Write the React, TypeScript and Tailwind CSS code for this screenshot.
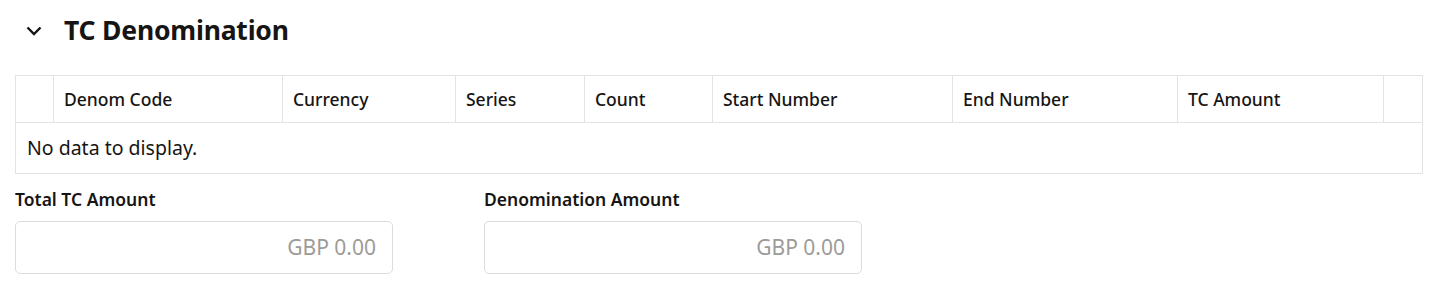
import React from "react";

const cols = ["", "Denom Code", "Currency", "Series", "Count", "Start Number", "End Number", "TC Amount", ""];

function Field({ label }: { label: string }) {
  return (
    <div className="flex flex-col w-[378px]">
      <div className="text-[17.5px] leading-[22px] font-semibold text-[#161513] h-[22px] mt-[14px]">{label}</div>
      <div className="mt-[11px] h-[53px] border border-[#dcdcdc] rounded-[5px] flex items-center justify-end pr-[16px] text-[21px] text-[#9d9b98]">
        GBP 0.00
      </div>
    </div>
  );
}

export default function App() {
  return (
    <div className="w-[1452px] h-[292px] bg-white" style={{ fontFamily: '"Noto Sans", sans-serif' }}>
      <div className="flex items-center h-[62px] pl-[24px]">
        <svg width="20" height="20" viewBox="0 0 20 20" className="mr-[20px]">
          <path d="M3.5 6.5 L10 13 L16.5 6.5" fill="none" stroke="#161513" strokeWidth="2.4" />
        </svg>
        <h1 className="text-[26.5px] font-bold text-[#161513] tracking-[-0.2px]">TC Denomination</h1>
      </div>
      <div className="ml-[15px] mt-[13px] w-[1408px] border border-[#e3e3e3]">
        <div className="grid grid-cols-[38px_229px_173px_129px_128px_240px_225px_206px_38px] h-[47px] border-b border-[#e3e3e3]">
          {cols.map((c, i) => (
            <div
              key={i}
              className={`flex items-center pl-[10px] text-[17.5px] font-medium text-[#161513] ${i < cols.length - 1 ? "border-r border-[#e3e3e3]" : ""}`}
            >
              {c}
            </div>
          ))}
        </div>
        <div className="h-[50px] flex items-center pl-[11px] text-[19.5px] text-[#161513]">No data to display.</div>
      </div>
      <div className="flex ml-[15px] gap-[91px]">
        <Field label="Total TC Amount" />
        <Field label="Denomination Amount" />
      </div>
    </div>
  );
}
